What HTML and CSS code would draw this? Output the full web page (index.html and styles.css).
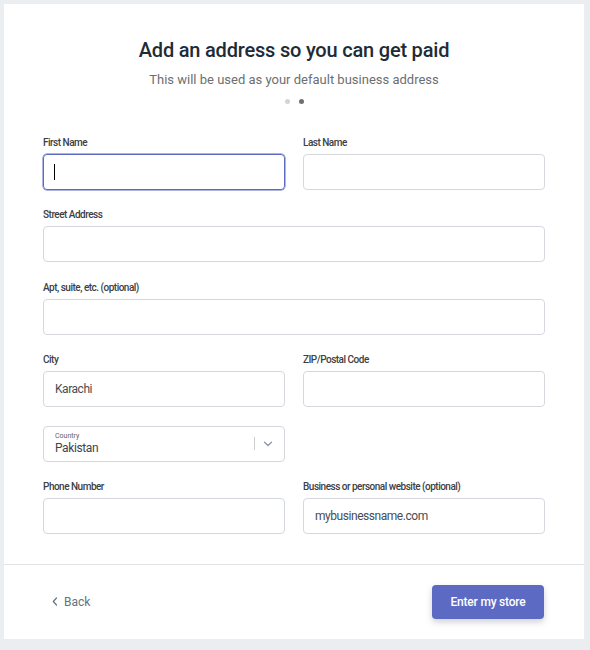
FILE: index.html
```html
<!DOCTYPE html>
<html>
<head>
<meta charset="utf-8">
<link rel="stylesheet" href="styles.css">
</head>
<body>
<div class="card">
  <div class="content">
    <h1 class="title">Add an address so you can get paid</h1>
    <p class="subtitle">This will be used as your default business address</p>
    <div class="dots"><span class="dot"></span><span class="dot active"></span></div>
    <div class="form">
      <div class="field">
        <label class="label">First Name</label>
        <div class="input-wrap">
          <div class="input focused"><span class="caret"></span></div>
        </div>
      </div>
      <div class="field">
        <label class="label">Last Name</label>
        <div class="input"></div>
      </div>
      <div class="field full">
        <label class="label">Street Address</label>
        <div class="input"></div>
      </div>
      <div class="field full">
        <label class="label">Apt, suite, etc. (optional)</label>
        <div class="input"></div>
      </div>
      <div class="field">
        <label class="label">City</label>
        <div class="input">Karachi</div>
      </div>
      <div class="field">
        <label class="label">ZIP/Postal Code</label>
        <div class="input"></div>
      </div>
      <div class="field">
        <div class="input select">
          <div class="select-text">
            <span class="select-label">Country</span>
            <span class="select-value">Pakistan</span>
          </div>
          <span class="select-sep"></span>
          <svg class="chev" width="10" height="6" viewBox="0 0 10 6"><path d="M1.5 1.2 L5 4.5 L8.5 1.2" fill="none" stroke="#8f9aa6" stroke-width="1.4" stroke-linecap="round" stroke-linejoin="round"/></svg>
        </div>
      </div>
      <div class="field empty"></div>
      <div class="field">
        <label class="label">Phone Number</label>
        <div class="input"></div>
      </div>
      <div class="field">
        <label class="label">Business or personal website (optional)</label>
        <div class="input">mybusinessname.com</div>
      </div>
    </div>
  </div>
  <div class="footer">
    <a class="back"><svg width="6" height="9" viewBox="0 0 6 9"><path d="M4.5 1 L1.3 4.5 L4.5 8" fill="none" stroke="#637381" stroke-width="1.2" stroke-linecap="round" stroke-linejoin="round"/></svg><span>Back</span></a>
    <button class="btn">Enter my store</button>
  </div>
</div>
</body>
</html>
```
FILE: styles.css
```css
html, body {
  margin: 0;
  padding: 0;
}
body {
  background: #ebeef0;
  font-family: Roboto, "Noto Sans", sans-serif;
  padding: 4px 6px 11px 4px;
  width: 580px;
}
.card {
  background: #ffffff;
  width: 580px;
  height: 635px;
  display: flex;
  flex-direction: column;
}
.content {
  padding: 33px 39px 30px 39px;
  border-bottom: 1px solid #e1e3e5;
}
.title {
  margin: 0;
  text-align: center;
  font-size: 20px;
  font-weight: 500;
  color: #212b36;
  line-height: 26px;
  letter-spacing: -0.2px;
}
.subtitle {
  margin: 8px 0 0 0;
  text-align: center;
  font-size: 13px;
  line-height: 18px;
  color: #6b6f73;
  font-weight: 400;
}
.dots {
  display: flex;
  justify-content: center;
  gap: 9px;
  margin-top: 10px;
  height: 5px;
}
.dot {
  width: 5px;
  height: 5px;
  border-radius: 50%;
  background: #d2d4d6;
}
.dot.active {
  background: #6d7175;
}
.form {
  margin-top: 32px;
  display: grid;
  grid-template-columns: 242px 242px;
  column-gap: 18px;
  row-gap: 18.4px;
}
.field.full {
  grid-column: 1 / 3;
}
.label {
  display: block;
  font-size: 10px;
  line-height: 14px;
  height: 14px;
  margin-bottom: 4px;
  font-weight: 500;
  color: #3c4044;
  letter-spacing: -0.5px;
}
.input-wrap {
  position: relative;
}
.input {
  box-sizing: border-box;
  height: 36px;
  border: 1px solid #d5d9de;
  border-radius: 4px;
  padding: 0 11px;
  font-size: 12px;
  letter-spacing: -0.45px;
  color: #474d53;
  display: flex;
  align-items: center;
  position: relative;
}
.input.focused {
  border-color: #5c6ac4;
  box-shadow: 0 0 0 0.5px #5c6ac4;
}
.caret {
  position: absolute;
  left: 10px;
  top: 9px;
  width: 1px;
  height: 16px;
  background: #000;
}
.select {
  padding-right: 11px;
}
.select-text {
  flex: 1;
  display: flex;
  flex-direction: column;
}
.select-label {
  font-size: 7px;
  line-height: 9px;
  color: #5f6368;
  margin-top: 1px;
  letter-spacing: 0;
}
.select-value {
  font-size: 12px;
  line-height: 15px;
  color: #3f4449;
  letter-spacing: -0.4px;
}
.select-sep {
  width: 1px;
  height: 13px;
  background: #c9cdd1;
  margin-right: 8px;
}
.chev {
  display: block;
}
.footer {
  flex: 1;
  display: flex;
  align-items: center;
  justify-content: space-between;
  padding: 0 40px 0 48px;
}
.back {
  display: flex;
  align-items: center;
  gap: 6px;
  color: #637381;
  font-size: 12px;
  cursor: pointer;
}
.btn {
  border: 0;
  background: #5c6ac4;
  color: #fff;
  font-family: Roboto, "Noto Sans", sans-serif;
  font-size: 12px;
  font-weight: 500;
  width: 112px;
  height: 34px;
  border-radius: 4px;
  box-shadow: 0 3px 6px rgba(60, 70, 90, 0.25);
  letter-spacing: -0.2px;
}
```
